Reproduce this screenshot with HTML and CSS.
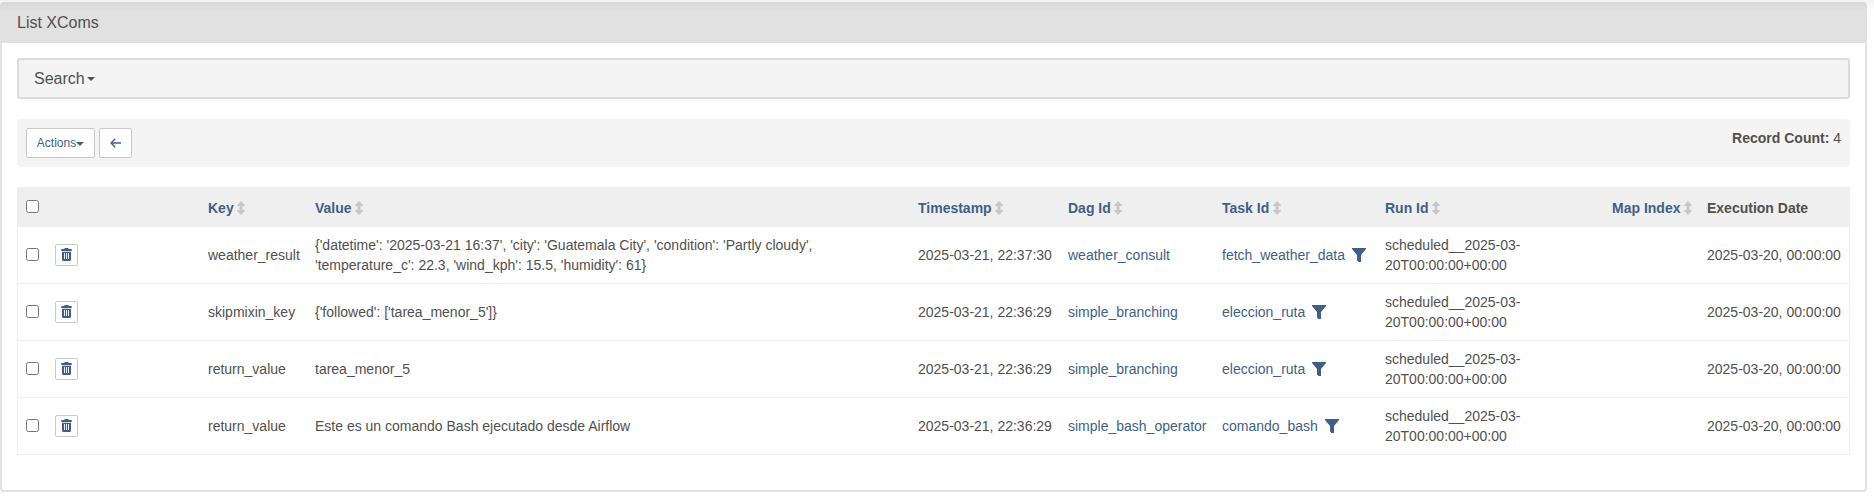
FILE: index.html
```
<!DOCTYPE html>
<html lang="en">
<head>
<meta charset="utf-8">
<title>List XComs</title>
<link rel="stylesheet" href="styles.css">
</head>
<body>
<svg class="sprite" width="0" height="0" aria-hidden="true">
  <symbol id="sort" viewBox="0 0 8 14"><path d="M4 0 8 4.300V5H5.500V9H8V9.700L4 14 0 9.700V9H2.500V5H0V4.300Z"/></symbol>
  <symbol id="trash" viewBox="0 0 11 13"><path fill-rule="evenodd" d="M3.5 0H7.500V1H10.700V3H.3V1H3.500ZM1 3.700H10V11.500Q10 13 8.500 13H2.500Q1 13 1 11.500ZM3 5V11H3.900V5ZM5.050 5V11H5.950V5ZM7.100 5V11H8V5Z"/></symbol>
  <symbol id="filter" viewBox="0 0 14 14"><path d="M0 0H14V1L9 7V14H6.500L5 12.500V7L0 1Z"/></symbol>
</svg>
<main class="panel">
  <header class="panel-title">List XComs</header>
  <div class="panel-body">
    <div class="search">Search<span class="caret"></span></div>
    <div class="toolbar">
      <button class="btn">Actions<span class="caret"></span></button>
      <button class="btn back" aria-label="Back"><svg width="11" height="10" viewBox="0 0 11 10"><path d="M11 5H1.200M5.200.8 1 5 5.200 9.200" fill="none" stroke="currentColor" stroke-width="1.300"/></svg></button>
      <div class="count"><strong>Record Count:</strong> 4</div>
    </div>
    <table class="grid">
      <colgroup><col class="c-check"><col class="c-tools"><col class="c-key"><col class="c-value"><col class="c-time"><col class="c-dag"><col class="c-task"><col class="c-run"><col class="c-map"><col class="c-date"></colgroup>
      <thead><tr>
        <th><input type="checkbox" class="check"></th><th></th>
        <th><a>Key<svg class="sort"><use href="#sort"/></svg></a></th>
        <th><a>Value<svg class="sort"><use href="#sort"/></svg></a></th>
        <th><a>Timestamp<svg class="sort"><use href="#sort"/></svg></a></th>
        <th><a>Dag Id<svg class="sort"><use href="#sort"/></svg></a></th>
        <th><a>Task Id<svg class="sort"><use href="#sort"/></svg></a></th>
        <th><a>Run Id<svg class="sort"><use href="#sort"/></svg></a></th>
        <th><a>Map Index<svg class="sort"><use href="#sort"/></svg></a></th>
        <th>Execution Date</th>
      </tr></thead>
      <tbody>
        <tr>
          <td><input type="checkbox" class="check"></td><td><button class="del" aria-label="Delete"><svg class="trash"><use href="#trash"/></svg></button></td>
          <td>weather_result</td><td>{'datetime': '2025-03-21 16:37', 'city': 'Guatemala City', 'condition': 'Partly cloudy',<br>'temperature_c': 22.3, 'wind_kph': 15.5, 'humidity': 61}</td>
          <td>2025-03-21, 22:37:30</td><td><a>weather_consult</a></td><td><a>fetch_weather_data<svg class="filter"><use href="#filter"/></svg></a></td>
          <td>scheduled__2025-03-<br>20T00:00:00+00:00</td><td></td><td>2025-03-20, 00:00:00</td>
        </tr>
        <tr>
          <td><input type="checkbox" class="check"></td><td><button class="del" aria-label="Delete"><svg class="trash"><use href="#trash"/></svg></button></td>
          <td>skipmixin_key</td><td>{'followed': ['tarea_menor_5']}</td>
          <td>2025-03-21, 22:36:29</td><td><a>simple_branching</a></td><td><a>eleccion_ruta<svg class="filter"><use href="#filter"/></svg></a></td>
          <td>scheduled__2025-03-<br>20T00:00:00+00:00</td><td></td><td>2025-03-20, 00:00:00</td>
        </tr>
        <tr>
          <td><input type="checkbox" class="check"></td><td><button class="del" aria-label="Delete"><svg class="trash"><use href="#trash"/></svg></button></td>
          <td>return_value</td><td>tarea_menor_5</td>
          <td>2025-03-21, 22:36:29</td><td><a>simple_branching</a></td><td><a>eleccion_ruta<svg class="filter"><use href="#filter"/></svg></a></td>
          <td>scheduled__2025-03-<br>20T00:00:00+00:00</td><td></td><td>2025-03-20, 00:00:00</td>
        </tr>
        <tr>
          <td><input type="checkbox" class="check"></td><td><button class="del" aria-label="Delete"><svg class="trash"><use href="#trash"/></svg></button></td>
          <td>return_value</td><td>Este es un comando Bash ejecutado desde Airflow</td>
          <td>2025-03-21, 22:36:29</td><td><a>simple_bash_operator</a></td><td><a>comando_bash<svg class="filter"><use href="#filter"/></svg></a></td>
          <td>scheduled__2025-03-<br>20T00:00:00+00:00</td><td></td><td>2025-03-20, 00:00:00</td>
        </tr>
      </tbody>
    </table>
  </div>
</main>
</body>
</html>
```
FILE: styles.css
```
* { box-sizing: border-box; }
body {
  margin: 0;
  padding-top: 2px;
  background: #fff;
  color: #51504f;
  font: 14px/20px "Liberation Sans", Arial, sans-serif;
  overflow: hidden;
}
/* soft shadow cast by the navigation bar above */
body::before {
  content: "";
  position: absolute;
  inset: 0 0 auto;
  height: 12px;
  background: linear-gradient(rgba(0, 0, 0, .05), rgba(0, 0, 0, 0));
  pointer-events: none;
}
.sprite { position: absolute; }
a { color: #415f86; }

.panel {
  width: 1867px;
  height: 490px;
  border: 2px solid #e1e1e1;
  border-radius: 4px;
}
.panel-title {
  height: 39px;
  padding: 9px 15px 0;
  background: #e1e1e1;
  font-size: 16px;
}
.panel-body { padding: 15px; }
.search {
  display: flex;
  align-items: center;
  height: 41px;
  padding: 1px 15px 0;
  border: 2px solid #dcdcdc;
  border-radius: 3px;
  background: #f4f4f4;
  font-size: 16px;
}
.caret {
  border: 4px solid transparent;
  border-top-color: currentColor;
  border-bottom: 0;
}
.search .caret { margin: 0 0 0 2px; }
.toolbar {
  display: flex;
  gap: 4px;
  height: 48px;
  margin: 20px 0;
  padding: 9px;
  border-radius: 4px;
  background: #f4f4f4;
}
.btn {
  display: flex;
  align-items: center;
  justify-content: center;
  width: 69px;
  height: 30px;
  padding: 0;
  border: 1px solid #c9c9c9;
  border-radius: 2px;
  background: #fff;
  color: #415f86;
  font: 12px/18px "Liberation Sans", Arial, sans-serif;
}
.btn .caret { margin-top: 2px; }
.back { width: 33px; }
.back svg { margin-top: -1px; }
.count { margin-left: auto; }

.grid {
  width: 1833px;
  table-layout: fixed;
  border-collapse: separate;
  border-spacing: 0;
  border: solid #efefef;
  border-width: 0 1px;
}
.c-check { width: 29px; }
.c-tools { width: 153px; }
.c-key { width: 107px; }
.c-value { width: 603px; }
.c-time { width: 150px; }
.c-dag { width: 154px; }
.c-task { width: 163px; }
.c-run { width: 227px; }
.c-map { width: 95px; }
.grid th, .grid td {
  padding: 0 0 0 8px;
  text-align: left;
  white-space: nowrap;
  vertical-align: middle;
}
.grid th { height: 40px; padding-top: 2px; background: #efefef; }
.grid td { height: 57px; border-bottom: 1px solid #efefef; }
.check { display: block; width: 13px; height: 13px; margin: 0; }
.grid th .check { margin-top: -3px; }
.grid td .check { margin-top: -1px; }
.sort { width: 8px; height: 14px; margin-left: 3.500px; vertical-align: -2px; fill: #c8c8c8; }
.del {
  display: flex;
  align-items: center;
  justify-content: center;
  width: 23px;
  height: 22px;
  padding: 0;
  border: 1px solid #c9c9c9;
  border-radius: 2px;
  background: #fff;
}
.trash { width: 11px; height: 13px; margin-top: -1px; fill: #415f86; }
.filter { width: 14px; height: 14px; margin-left: 7px; vertical-align: -2px; fill: #415f86; }
```
